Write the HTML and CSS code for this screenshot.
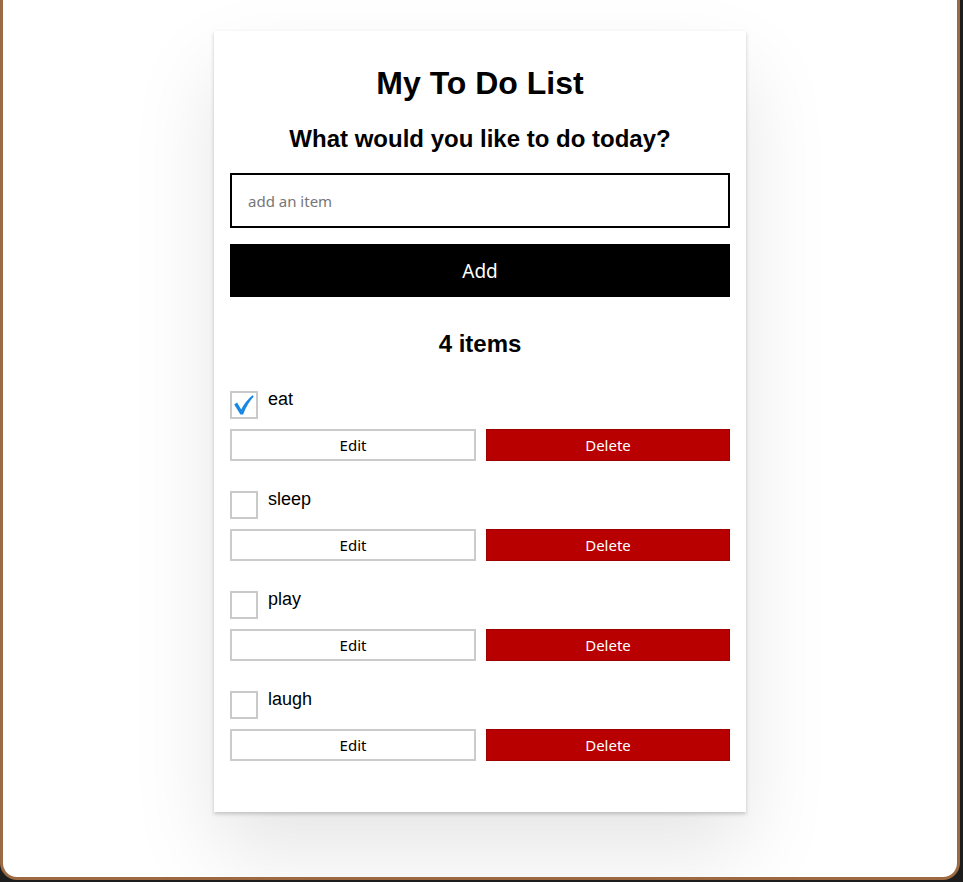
FILE: index.html
```html
<!DOCTYPE html>
<html lang="en">
<head>
<meta charset="utf-8">
<title>My To Do List</title>
<link rel="stylesheet" href="styles.css">
</head>
<body>
<div class="frame">
  <main class="todoapp">
    <h1 class="title">My To Do List</h1>
    <form class="add-form">
      <h2 class="label-lg">What would you like to do today?</h2>
      <input class="input-lg" type="text" placeholder="add an item">
      <button type="button" class="btn-primary">Add</button>
    </form>
    <h2 class="count">4 items</h2>
    <ul class="todo-list">
      <li class="todo">
        <div class="todo-main">
          <span class="cb"><svg class="check" viewBox="0 0 28 28" width="28" height="28"><path d="M4.2 13.6 L7.1 11.6 L11.2 18.6 Q15.2 10.4 22.5 4.3 L23.8 5.6 Q17.2 12.6 13.1 23.4 L10.4 23.6 Z"/></svg></span>
          <span class="todo-label">eat</span>
        </div>
        <div class="btn-group">
          <button type="button" class="btn">Edit</button>
          <button type="button" class="btn btn-danger">Delete</button>
        </div>
      </li>
      <li class="todo">
        <div class="todo-main">
          <span class="cb"></span>
          <span class="todo-label">sleep</span>
        </div>
        <div class="btn-group">
          <button type="button" class="btn">Edit</button>
          <button type="button" class="btn btn-danger">Delete</button>
        </div>
      </li>
      <li class="todo">
        <div class="todo-main">
          <span class="cb"></span>
          <span class="todo-label">play</span>
        </div>
        <div class="btn-group">
          <button type="button" class="btn">Edit</button>
          <button type="button" class="btn btn-danger">Delete</button>
        </div>
      </li>
      <li class="todo">
        <div class="todo-main">
          <span class="cb"></span>
          <span class="todo-label">laugh</span>
        </div>
        <div class="btn-group">
          <button type="button" class="btn">Edit</button>
          <button type="button" class="btn btn-danger">Delete</button>
        </div>
      </li>
    </ul>
  </main>
</div>
</body>
</html>
```
FILE: styles.css
```css
* { box-sizing: border-box; }

html, body {
  margin: 0;
  padding: 0;
}

body {
  background: #1d1d1d;
  font-family: "Liberation Sans", Arial, sans-serif;
  color: #000;
  height: 882px;
  overflow: hidden;
}

.frame {
  width: 960px;
  height: 880px;
  background: #fff;
  border: 3px solid #9b6a42;
  border-top: none;
  border-radius: 0 0 17px 17px;
  overflow: hidden;
  padding-top: 31px;
}

.todoapp {
  width: 532px;
  margin: 0 auto;
  background: #fff;
  padding: 16px;
  box-shadow: 0 2px 4px 0 rgba(0, 0, 0, 0.2), 0 40px 80px 0 rgba(0, 0, 0, 0.1);
}

.title {
  margin: 16px 0 0;
  font-size: 32px;
  line-height: 40px;
  font-weight: 700;
  text-align: center;
}

.add-form {
  margin: 0;
  display: flex;
  flex-direction: column;
}

.label-lg,
.count {
  margin: 22px 0 0;
  font-size: 24px;
  line-height: 28px;
  font-weight: 700;
  text-align: center;
}

.input-lg {
  margin-top: 20px;
  height: 55px;
  width: 100%;
  border: 2px solid #000;
  padding: 0 16px;
  font-family: "Noto Sans", "Open Sans", sans-serif;
  font-size: 15px;
  color: #000;
  background: #fff;
  border-radius: 0;
  outline: none;
}

.input-lg::placeholder {
  color: #767676;
}

.btn-primary {
  margin-top: 16px;
  height: 53px;
  width: 100%;
  border: none;
  background: #000;
  color: #fff;
  font-family: "Noto Sans", "Open Sans", sans-serif;
  font-size: 19px;
  padding: 0;
}

.count {
  margin-top: 33px;
}

.todo-list {
  list-style: none;
  margin: 33px 0 35px;
  padding: 0;
  display: flex;
  flex-direction: column;
  gap: 30px;
}

.todo-main {
  display: flex;
  align-items: flex-start;
  gap: 10px;
}

.cb {
  width: 28px;
  height: 28px;
  border: 2px solid #c9c9c9;
  flex: 0 0 28px;
  position: relative;
}

.check {
  position: absolute;
  left: -2px;
  top: -2px;
  fill: #1a87e3;
}

.todo-label {
  font-size: 18px;
  line-height: 17px;
}

.btn-group {
  margin-top: 10px;
  display: flex;
  gap: 10px;
}

.btn {
  flex: 1 1 0;
  height: 32px;
  border: 2px solid #cbcbcb;
  background: #fff;
  color: #000;
  font-family: "Noto Sans", "Open Sans", sans-serif;
  font-size: 15px;
  padding: 0;
  border-radius: 0;
}

.btn-danger {
  background: #b90000;
  border: 1px solid #9c0000;
  color: #fff;
}
```
